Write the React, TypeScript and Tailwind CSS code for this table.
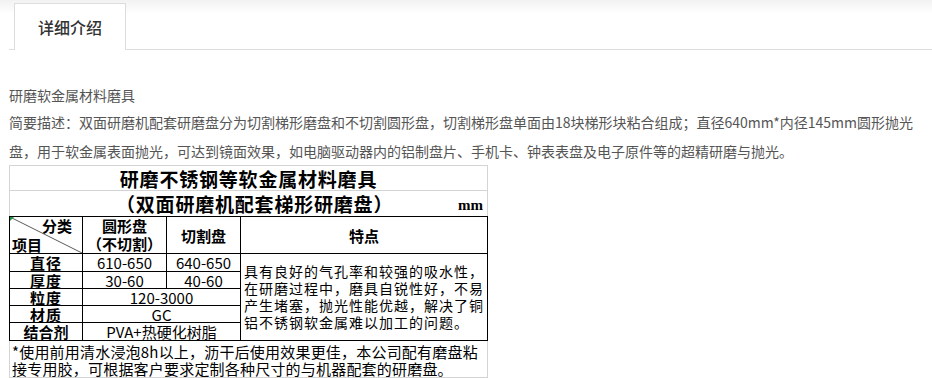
export default function App() {
  const cell = 'border border-black p-0 text-center align-middle text-[15px] leading-[15px]';
  const label = 'font-bold';

  return (
    <div className="w-[932px] h-[378px] overflow-hidden bg-white font-['Noto_Sans_CJK_SC',sans-serif]">
      {/* tab bar */}
      <div className="bg-[linear-gradient(#f2f2f2,#ffffff_14px)]">
        <div className="ml-[9px] flex h-[50px] border-b border-[#dddddd] pt-[3px]">
          <div className="relative ml-[5px] flex h-[47px] w-[112px] items-center justify-center border border-b-0 border-[#dddddd] bg-white text-[16px] font-medium text-[#333]">
            详细介绍
          </div>
        </div>
      </div>

      {/* intro */}
      <div className="w-[920px] pl-[9px] text-[14px] text-[#555]">
        <p className="mt-[32px] leading-[26px]">研磨软金属材料磨具</p>
        <p className="leading-[29px]">
          简要描述：双面研磨机配套研磨盘分为切割梯形磨盘和不切割圆形盘，切割梯形盘单面由18块梯形块粘合组成；直径640mm*内径145mm圆形抛光盘，用于软金属表面抛光，可达到镜面效果，如电脑驱动器内的铝制盘片、手机卡、钟表表盘及电子原件等的超精研磨与抛光。
        </p>
      </div>

      {/* spec table */}
      <table className="ml-[9px] -mt-px w-[478px] table-fixed border-collapse text-black">
        <colgroup>
          <col className="w-[73px]" />
          <col className="w-[84px]" />
          <col className="w-[74px]" />
          <col className="w-[247px]" />
        </colgroup>
        <tbody>
          <tr className="h-[25px]">
            <td colSpan={4} className="border border-[#d4d4d4] p-0 text-center text-[19px] font-bold leading-[19px] tracking-[0.8px]">
              研磨不锈钢等软金属材料磨具
            </td>
          </tr>
          <tr className="h-[26px]">
            <td colSpan={4} className="border border-[#d4d4d4] border-b-black p-0 text-[19px] leading-[19px]">
              <div className="flex items-center pl-[106px] pr-[4px]">
                <span className="font-bold tracking-[0.8px]">（双面研磨机配套梯形研磨盘）</span>
                <span className="ml-auto pt-[4px] font-['Liberation_Serif',serif] text-[15px] font-bold leading-none">mm</span>
              </div>
            </td>
          </tr>
          <tr className="h-[37px]">
            <td className={`${cell} relative`}>
              <svg className="absolute inset-0 h-full w-full" viewBox="0 0 73 37" preserveAspectRatio="none">
                <line x1="0" y1="0" x2="73" y2="37" stroke="#555" strokeWidth="1" />
                <polygon points="0,0 4,0 0,4" fill="#1a9a3a" />
              </svg>
              <div className="relative flex h-[36px] flex-col justify-between pb-[1px] pt-[1px]">
                <span className={`${label} self-end pr-[10px]`}>分类</span>
                <span className={`${label} self-start pl-[2px]`}>项目</span>
              </div>
            </td>
            <td className={cell}>
              <div className={`${label} leading-[18px]`}>
                圆形盘
                <br />
                （不切割）
              </div>
            </td>
            <td className={cell}>
              <span className={label}>切割盘</span>
            </td>
            <td className={cell}>
              <span className={label}>特点</span>
            </td>
          </tr>
          <tr className="h-[18px]">
            <td className={cell}><span className={`${label} tracking-[1px]`}>直径</span></td>
            <td className={cell}>610-650</td>
            <td className={cell}>640-650</td>
            <td rowSpan={5} className="border border-black px-[3px] py-0 text-left align-middle text-[14px] leading-[17px] tracking-[1px]">
              具有良好的气孔率和较强的吸水性，
              <br />
              在研磨过程中，磨具自锐性好，不易
              <br />
              产生堵塞，抛光性能优越，解决了铜
              <br />
              铝不锈钢软金属难以加工的问题。
            </td>
          </tr>
          <tr className="h-[17px]">
            <td className={cell}><span className={`${label} tracking-[1px]`}>厚度</span></td>
            <td className={cell}>30-60</td>
            <td className={cell}>40-60</td>
          </tr>
          <tr className="h-[17px]">
            <td className={cell}><span className={`${label} tracking-[1px]`}>粒度</span></td>
            <td colSpan={2} className={cell}>120-3000</td>
          </tr>
          <tr className="h-[17px]">
            <td className={cell}><span className={`${label} tracking-[1px]`}>材质</span></td>
            <td colSpan={2} className={cell}>GC</td>
          </tr>
          <tr className="h-[18px]">
            <td className={cell}><span className={label}>结合剂</span></td>
            <td colSpan={2} className={cell}>PVA+热硬化树脂</td>
          </tr>
          <tr>
            <td colSpan={4} className="whitespace-nowrap border border-[#d4d4d4] border-t-black pl-[2px] pr-0 pt-[2px] text-left text-[15px] leading-[17px] tracking-[0.2px]">
              *使用前用清水浸泡8h以上，沥干后使用效果更佳，本公司配有磨盘粘
              <br />
              接专用胶，可根据客户要求定制各种尺寸的与机器配套的研磨盘。
            </td>
          </tr>
        </tbody>
      </table>
    </div>
  );
}
